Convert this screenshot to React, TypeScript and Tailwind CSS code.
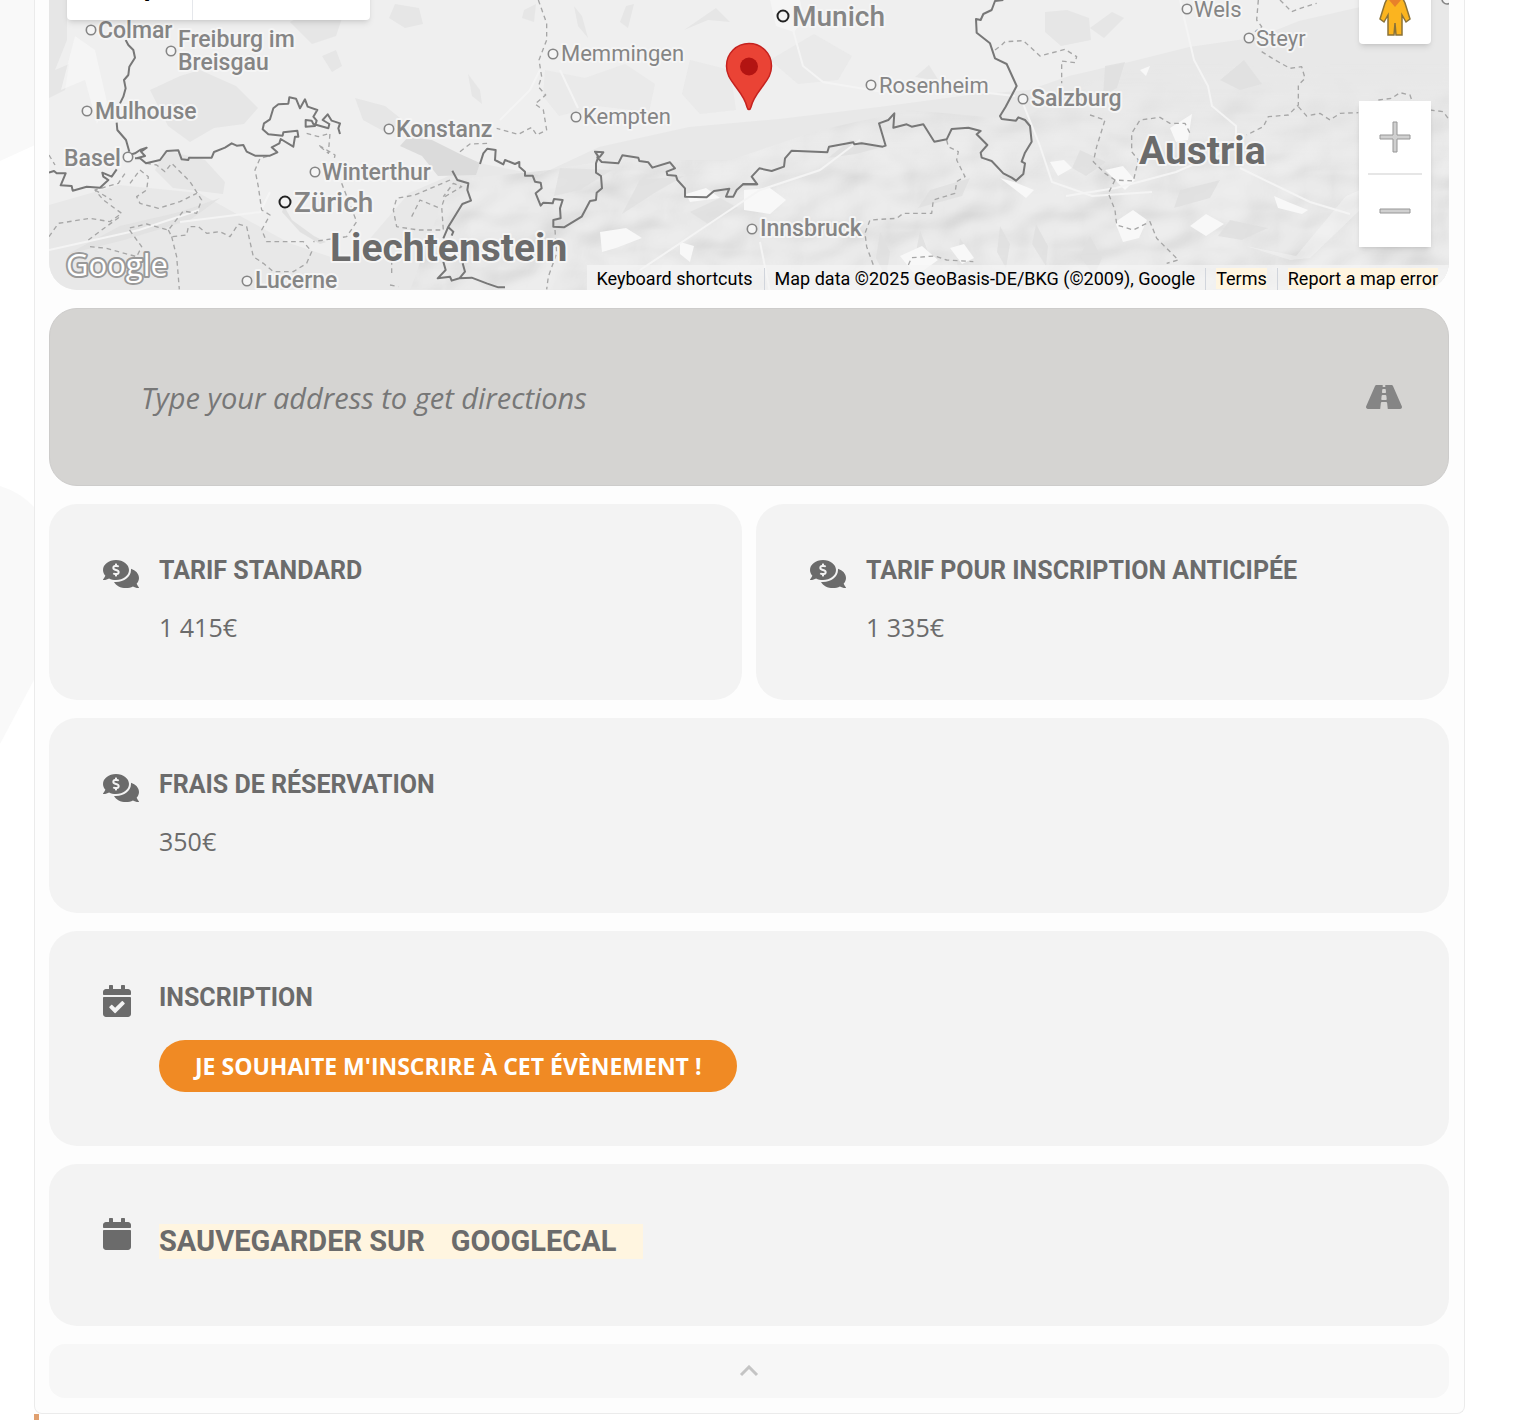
import * as React from 'react'
import { FaCalendar, FaCalendarCheck, FaCommentsDollar, FaRoad } from 'react-icons/fa'

interface City {
  name: string
  x: number
  y: number
  size: number
  weight: number
  dot?: [number, number]
  capital?: boolean
}

const cities: City[] = [
  { name: 'Colmar', x: 98, y: 38, size: 23, weight: 500, dot: [91, 30] },
  { name: 'Freiburg im', x: 178, y: 47, size: 23, weight: 500, dot: [171, 51] },
  { name: 'Breisgau', x: 178, y: 70, size: 23, weight: 500 },
  { name: 'Mulhouse', x: 95, y: 119, size: 23, weight: 500, dot: [87, 111] },
  { name: 'Basel', x: 64, y: 166, size: 23, weight: 500, dot: [128, 157] },
  { name: 'Konstanz', x: 396, y: 137, size: 23, weight: 500, dot: [389, 129] },
  { name: 'Winterthur', x: 322, y: 180, size: 23, weight: 500, dot: [315, 172] },
  { name: 'Zürich', x: 294, y: 212, size: 28, weight: 500, dot: [285, 202], capital: true },
  { name: 'Lucerne', x: 255, y: 288, size: 23, weight: 500, dot: [247, 281] },
  { name: 'Memmingen', x: 561, y: 61, size: 22, weight: 400, dot: [553, 54] },
  { name: 'Kempten', x: 583, y: 124, size: 22, weight: 400, dot: [576, 117] },
  { name: 'Munich', x: 792, y: 26, size: 28, weight: 500, dot: [783, 16], capital: true },
  { name: 'Rosenheim', x: 879, y: 93, size: 22, weight: 400, dot: [871, 85] },
  { name: 'Salzburg', x: 1031, y: 106, size: 23, weight: 500, dot: [1023, 99] },
  { name: 'Innsbruck', x: 760, y: 236, size: 23, weight: 500, dot: [752, 229] },
  { name: 'Wels', x: 1194, y: 17, size: 22, weight: 400, dot: [1187, 9] },
  { name: 'Steyr', x: 1256, y: 46, size: 22, weight: 400, dot: [1249, 38] },
]

const font = 'Roboto, "Liberation Sans", sans-serif'

// each tile is drawn at three times the size of the map
const tiles = [
  {
    x: 40,
    border:
      'M257 120 265 135 280 150 285 173 268 200 265 225 252 240 257 265 250 290 240 310M230 368 232 390 245 405 258 420 268 455M285 475 300 475 318 490 360 480 380 453 415 451 425 478 445 480 447 473 515 473 522 456 555 443 575 430 590 437 610 435 620 455 645 467 690 467 712 457 695 442 718 430 722 417 760 440 765 410 775 410 772 392 730 397 728 407 685 403 668 388 672 370 690 358 700 325 715 313 745 311 748 292 768 296 780 325 795 298 803 320 832 330 820 350 830 362 825 378 797 380 797 360 815 362 820 372 865 385 868 372 848 360 863 343 875 362 900 370 895 385 900 402M268 465 285 460 300 450 320 443 303 455 315 468 290 475M27 518 42 513 50 520 77 520 62 556 95 558 98 572 140 560 180 563 205 540 190 530 187 518 215 530 230 508',
    region:
      'M27 465 45 495M27 710 55 670 150 655 210 665 245 640 190 600 165 570 235 550 255 520M165 570 215 600M145 720 185 690 240 650M150 740 200 745 290 770 305 740 265 685 320 672 385 690 430 633 470 640 485 600 450 545 440 535 395 490 375 515 350 495 320 490M270 550 300 510 325 530 320 570 290 590 300 610 355 625 420 605 470 580M385 690 395 710 440 705 445 680 475 680 500 700 540 695 570 710 595 672 620 680 640 770 670 790 700 815 760 815 800 790 815 755 790 725 680 725 665 690 690 645 665 630 655 560 645 510 660 475 690 467M395 710 410 770 418 868M905 550 950 665 920 710 820 725M800 400 835 410 870 400 865 460 835 435 885 465 880 490',
  },
  {
    x: 390,
    border:
      'M270 492 280 460 292 446 317 450 315 480 340 493 345 480 375 492 388 486 388 500 405 515 405 527 428 527 435 545 452 548 455 565 437 580 452 617 460 608 488 610 492 597 518 600 510 625 512 655 490 660 490 680 522 682 575 650 600 603 618 600 620 578 636 565 633 528 618 518 618 490 625 470 615 455 640 457 630 470 622 472 635 486 685 490 697 466 745 473 748 483 775 487 787 503 840 487 855 505 830 515 832 525 858 527 862 540 885 565 885 590 950 592 972 573 1018 566 1008 590 1030 590 1040 570 1060 552 1102 553M187 512 202 540 235 550 232 570 243 602 217 612 175 680 160 715M175 682 190 695 185 707M160 785 167 810 143 835 180 830 185 842 208 835 225 815 218 790M208 835 245 833 290 850 325 862 345 862',
    region:
      'M445 0 470 70 470 120 447 180 455 230 445 260 467 285 435 312 460 330 470 390 440 405 425 382 385 403 320 385M210 455 240 432 295 430M495 690 500 760 475 830 470 868M180 540 75 585 20 595 10 630 20 680 85 690 160 690 155 620 165 590 215 560 190 550 160 590M65 650 90 600 150 625M5 780 5 830M0 855 25 860',
  },
  {
    x: 740,
    border:
      'M8 553 52 553 35 530 58 505 95 513 132 500 135 475 155 452 262 457 267 440 340 427 343 433 365 430 428 440 437 437 417 370 445 360 463 340 460 383 500 373 515 380 550 373 583 425 620 418 635 387 685 383 722 393 710 403 742 435 722 458 725 473 755 483 790 520 815 533 828 542 850 522 855 490 845 485 855 458 875 425 870 378 855 360 835 352 828 362 785 357 780 348 797 320 830 258 800 192 765 175 750 130 710 98 708 57 722 60 730 42 755 30 765 3 790 0',
    region:
      'M765 150 785 135 795 125 850 122 900 168 975 148 1010 170 1005 188 965 183 965 250M620 420 625 440 655 455 650 480 675 530 650 545 645 580 580 600 575 640 490 640 470 655 390 660 375 700 380 740 400 795M505 795 515 773 585 768 620 780 700 785',
  },
  {
    x: 1090,
    border: '',
    region:
      'M0 345 45 360 20 440 10 485 45 520 75 540 130 543 145 480 125 455 125 400 150 360 210 352 240 370 285 370 300 400M75 540 55 580 75 630 80 675 130 690 180 665 200 715 265 780 230 790M505 0 500 60 515 80 495 95M515 155 555 180 600 205 635 200 645 235 625 255 625 315 595 345 535 350 520 380 470 405M625 320 650 348 690 340 720 360 750 340 805 338M1020 330 1060 335 1078 360M865 300 905 295 930 278 960 285 965 300M570 0 605 35 640 22 680 10',
  },
]

function Terrain() {
  return (
    <g>
      <rect x="49" y="0" width="1400" height="290" fill="#efefef" />
      <g fill="#e6e6e6">
        <path d="M49 0h18v40l-12 30 14-6-4 26-16 8z" />
        <path d="M150 90l30-14 20-6 36 16 22 22-14 16-30 4-24 14-22-16z" />
        <path d="M290 22l20-10 32 6-6 18-24 8zM322 56l14-6 6 16-10 6zM355 98l30 8 20 16-20 10-22-12z" />
        <path d="M165 150l40 10 20 22-2 12-50-6-18-18z" />
        <path d="M395 4l24 4 4 16-18 4-16-10zM524 10l12-6-2 18-12-4zM574 6l8 10 6 22-10-12zM626 6l8-2-6 24-8-6zM684 30l32-22 14 14-22-2z" />
        <path d="M468 74l12 16 2 14-10-8z" />
        <path d="M545 70l40 8 40-14 30 20-6 28-52-6-38 10-16-20z" opacity="0.6" />
        <path d="M690 60l40 10 6 40-36 4-18-20zM770 60l44-26 38 22-14 24-40 4z" opacity="0.6" />
        <path d="M915 77l14-12 10 16zM1045 12l22-2 22 8 2 22-30 6-16-14z" />
        <path d="M1090 28l22-16 12 6-20 20z" />
      </g>
      <path d="M49 205l70-20 80 8 90 50 60 20 60-70 70-30 60 12 60-28 90-20 90-8 100-12 90-12 60-5 40-14 60-14 60-15 70-10 40-16 70-16 80-8V290H49z" fill="#e8e8e8" />
      <path d="M410 290l40-110 100-10 60-10 120 0 90-30 90-20 110 10 70-40 80-20 130 10 149-30V290z" fill="#fff" filter="url(#relief)" mask="url(#alps)" opacity="0.4" />
      <g fill="#dbdbdb">
        <path d="M408 137l24 3 28 14 20 9-4 12-38 1-16-20-22-10z" />
        <path d="M284 206l8 14 22 16 12 6-6 2-20-12-18-20z" opacity="0.7" />
      </g>
      <g fill="#e0e0e0" opacity="0.8">
        <path d="M120 226l60-14 40-14-30 22-66 20-56 14z" />
        <path d="M560 168l52 2-32 20-26 6zM640 180l44-4-28 16-34 22zM690 212l30-14 18 10-30 16zM850 140l36 6-30 8-28 4zM930 190l40-12-8 18-44 12zM1080 150l26 12-20 14-14-8zM1180 190l40-10-10 18-36 10zM1230 220l38 8-26 12-24-4zM1105 66l20-4-8 26-14 8zM1220 80l24-20 18 24-22 6z" />
        <path d="M880 232l10 20-4 26-10-20zM920 230l8 22-4 26-9-20zM960 238l10 16-4 26-9-16zM1000 226l10 18-4 24-9-16zM1036 224l12 22-2 20-14-22zM1090 236l12 22-8 18-14-20z" />
      </g>
      <g fill="#f8f8f8">
        <path d="M75 36l20 14 12 52-10 22-12-44-24 10zM770 0h30l4 20-10 12-18-6z" opacity="0.6" />
        <path d="M686 194l20-6 14 10-30 4zM744 190l26-2 16 12-16 14-26-4zM600 232l26-4 16 10-26 10-14 4zM680 242l14 4-4 16-10-8z" />
        <path d="M900 256l22-10 16 14-22 16zM950 248l14-4 10 14-12 6zM1000 178l14 4 20 8-8 8zM1050 162l14-2 8 8-14 8zM1105 170l18-4 12 14-10 10zM1170 128l22-14-4 26-12 2zM1274 196l14 6 20 8-6 4-24-6zM1140 70l10-4-4 10z" />
        <path d="M1115 222l18-12 14 10-8 18-16 4zM1190 226l16-12 18 10-18 12z" />
        <path d="M1246 246l50 10 50-60 14-6v20l-50 48-20 2z" opacity="0.4" />
      </g>
      <g fill="none" stroke="#f4f4f4" strokeWidth="2">
        <path d="M793 30l10 36 20 16 60 10 60-4 72 8M640 270l60-40 60-40 60-20 40-30" />
        <path d="M1180 0l14 60 14 26 4 20 24 20v20l-60 26-60 16-50 8M1240 168l70 34 40 12" />
        <path d="M500 120l30-30 10-20M560 70l18 38M1020 96l20 50 12 36 40 14 60-4M770 292l-10-50" />
        <path d="M49 250l90-20 60-20M180 222l80-10 10-20" />
      </g>
    </g>
  )
}

function Borders() {
  return (
    <g fill="none" strokeLinejoin="round">
      {tiles.map((t) => (
        <g key={t.x} transform={`translate(${t.x} 0) scale(0.33333)`}>
          <path d={t.region} stroke="#a6a6a6" strokeWidth="4" strokeDasharray="14 11" />
          <path d={t.border} stroke="#777" strokeWidth="6" />
        </g>
      ))}
    </g>
  )
}

function MapCanvas() {
  return (
    <svg viewBox="49 0 1400 290" preserveAspectRatio="xMidYMax slice" className="block h-[290px] w-full" role="img" aria-label="Map">
      <defs>
        <filter id="relief" x="0" y="0" width="100%" height="100%">
          <feTurbulence type="fractalNoise" baseFrequency="0.018 0.026" numOctaves="2" seed="8" result="noise" />
          <feDiffuseLighting in="noise" surfaceScale="9" diffuseConstant="1.05" lightingColor="#f2f2f2" result="light">
            <feDistantLight azimuth="225" elevation="62" />
          </feDiffuseLighting>
          <feComposite in="light" in2="SourceAlpha" operator="in" />
        </filter>
        <linearGradient id="fade" x1="0" y1="0" x2="0" y2="1">
          <stop offset="0" stopColor="#000" />
          <stop offset="0.5" stopColor="#fff" />
        </linearGradient>
        <mask id="alps" maskUnits="userSpaceOnUse" x="400" y="60" width="1060" height="230">
          <rect x="400" y="60" width="1060" height="230" fill="url(#fade)" />
        </mask>
      </defs>
      <Terrain />
      <Borders />
      <g fontFamily={font} fill="#858585" stroke="#f5f5f5" strokeWidth="4" strokeLinejoin="round" paintOrder="stroke">
        {cities.map((c) => (
          <text key={c.name} x={c.x} y={c.y} fontSize={c.size} fontWeight={c.weight}>
            {c.name}
          </text>
        ))}
        <g fill="#6b6b6b" fontSize="39" fontWeight="700">
          <text x="330" y="261">Liechtenstein</text>
          <text x="1139" y="164">Austria</text>
        </g>
      </g>
      {cities.map((c) =>
        c.dot ? (
          <circle
            key={c.name}
            cx={c.dot[0]}
            cy={c.dot[1]}
            r={c.capital ? 5.5 : 4.7}
            fill="#f5f5f5"
            stroke={c.capital ? '#222' : '#858585'}
            strokeWidth={c.capital ? 2 : 1.6}
          />
        ) : null
      )}
      <circle cx="1447" cy="-1" r="5" fill="#f5f5f5" stroke="#858585" strokeWidth="1.6" />
      {/* marker */}
      <path d="M749 43.500c-12.500 0-22.500 10-22.500 22.500 0 8 3.500 13 8 19 6 8 11 14 12.500 22 .5 2 1 2.500 2 2.500s1.500-.5 2-2.500c1.500-8 6.500-14 12.500-22 4.500-6 8-11 8-19 0-12.500-10-22.500-22.500-22.500z" fill="#ea4335" stroke="#c5221f" strokeWidth="1.500" />
      <circle cx="749" cy="66.500" r="9" fill="#b31412" />
      <text x="66" y="276" fontFamily={'"Open Sans", sans-serif'} fontSize="31" fontWeight="500" fill="#fff" stroke="#999" strokeWidth="4" strokeLinejoin="round" paintOrder="stroke">
        Google
      </text>
    </svg>
  )
}

function EventMap() {
  return (
    <div className="relative overflow-hidden rounded-b-[28px] font-[Roboto,'Liberation_Sans',sans-serif]">
      <MapCanvas />
      <div className="absolute -top-[52px] left-[18px] flex h-[72px] overflow-hidden rounded-sm bg-white text-[32px] shadow-md">
        <button type="button" className="w-[126px] border-r border-gray-200 font-medium text-black">Map</button>
        <button type="button" className="w-[177px] text-gray-600">Satellite</button>
      </div>
      <button type="button" aria-label="Street View" className="absolute -top-7 right-[18px] flex h-[72px] w-[72px] justify-center overflow-hidden rounded-sm bg-white shadow-md">
        <svg viewBox="0 0 32 64" className="h-16 w-8">
          <circle cx="16" cy="16" r="8" fill="#fbb41f" />
          <path d="M9 25h14l3 6 5 16-4 3-4-7v20h-6l-1-12-1 12H9V43l-4 7-4-3 5-16z" fill="#fbb41f" stroke="#8a7238" strokeWidth="1.500" />
          <path d="M10 28h12l-6 7z" fill="#e8802a" />
        </svg>
      </button>
      <div className="absolute top-[101px] right-[18px] flex w-[72px] flex-col items-center bg-white shadow-md">
        <button type="button" aria-label="Zoom in" className="flex h-[72px] w-full items-center justify-center">
          <svg viewBox="0 0 32 32" className="h-8 w-8">
            <path d="M14 1h4v13h13v4H18v13h-4V18H1v-4h13z" fill="#d0d0d0" stroke="#969696" />
          </svg>
        </button>
        <div className="h-[2px] w-[54px] bg-[#e6e6e6]" />
        <button type="button" aria-label="Zoom out" className="flex h-[72px] w-full items-center justify-center">
          <svg viewBox="0 0 32 32" className="h-8 w-8">
            <path d="M1 14h30v4H1z" fill="#d0d0d0" stroke="#969696" />
          </svg>
        </button>
      </div>
      <div className="absolute right-0 bottom-0 flex h-[25px] items-end bg-[#f5f5f5]/70 pr-[11px] pl-[9px] text-[18px] leading-[22px] whitespace-nowrap text-black">
        <button type="button" className="pr-[11px]">Keyboard shortcuts</button>
        <span className="border-l border-gray-300 px-[10px]">Map data ©2025 GeoBasis-DE/BKG (©2009), Google</span>
        <span className="border-l border-gray-300 px-[10px]">
          <a href="#terms" className="bg-[#fff5e0]">Terms</a>
        </span>
        <span className="border-l border-gray-300 pl-[10px]">
          <a href="#report" className="bg-[#fff5e0]">Report a map error</a>
        </span>
      </div>
    </div>
  )
}

interface CardProps {
  icon: React.ReactNode
  title?: string
  className?: string
  children: React.ReactNode
}

function Card({ icon, title, className = 'pb-[52px]', children }: CardProps) {
  return (
    <section className={`flex flex-1 rounded-[28px] bg-[#f3f3f3] px-[54px] text-[#6b6b6b] ${className}`}>
      <div className="w-14 shrink-0 pt-[54px]">{icon}</div>
      <div className="min-w-0 flex-1 pt-[51px]">
        {title && (
          <h3 className="font-[Roboto,'Liberation_Sans',sans-serif] text-[25px] leading-8 font-bold uppercase">{title}</h3>
        )}
        {children}
      </div>
    </section>
  )
}

function Price({ children }: { children: React.ReactNode }) {
  return <p className="mt-5 text-[25px] leading-10">{children}</p>
}

export default function App() {
  return (
    <div className="relative overflow-hidden bg-white font-['Open_Sans','Liberation_Sans',sans-serif]">
      <svg viewBox="0 0 35 760" className="absolute top-0 left-0 h-[760px] w-[35px]" aria-hidden="true">
        <path d="M0 0h35v145L0 161z" fill="#f9f9f9" />
        <path d="M0 486q20 6 35 22v170L0 744z" fill="#f9f9f9" />
      </svg>
      <main className="relative mr-[59px] ml-[34px] flex flex-col gap-[18px] rounded-b-lg border-x border-b border-[#ebebeb] bg-[#fdfdfd] pr-[15px] pb-[15px] pl-[14px]">
        <EventMap />

        <form
          onSubmit={(e) => e.preventDefault()}
          className="flex h-[178px] items-center rounded-[28px] border border-[#cdcccb] bg-[#d5d4d2] pr-[46px] pl-[91px]"
        >
          <input
            type="text"
            aria-label="Type your address to get directions"
            placeholder="Type your address to get directions"
            className="h-full min-w-0 flex-1 bg-transparent text-[29px] text-[#666] italic outline-none placeholder:text-[#777]"
          />
          <button type="submit" aria-label="Get directions" className="text-[#858585]">
            <FaRoad className="h-8 w-9" />
          </button>
        </form>

        <div className="flex gap-[14px]">
          <Card icon={<FaCommentsDollar className="h-8 w-9" />} title="Tarif standard" className="pb-[53px]">
            <Price>1 415€</Price>
          </Card>
          <Card icon={<FaCommentsDollar className="h-8 w-9" />} title="Tarif pour inscription anticipée" className="pb-[53px]">
            <Price>1 335€</Price>
          </Card>
        </div>

        <Card icon={<FaCommentsDollar className="h-8 w-9" />} title="Frais de réservation">
          <Price>350€</Price>
        </Card>

        <Card icon={<FaCalendarCheck className="h-8 w-7" />} title="Inscription" className="pb-[54px]">
          <a href="#inscription" className="mt-[26px] inline-block rounded-full bg-[#f08a24] px-9 align-top text-[23px] leading-[52px] font-bold text-white uppercase">
            Je souhaite m'inscrire à cet évènement !
          </a>
        </Card>

        <Card icon={<FaCalendar className="h-8 w-7" />} className="pb-[67px]">
          <div className="mt-[9px] flex font-[Roboto,'Liberation_Sans',sans-serif] text-[29px] leading-[35px] font-bold uppercase">
            <a href="#ics" className="bg-[#fff5e0] pr-[26px]">Sauvegarder sur</a>
            <a href="#googlecal" className="bg-[#fff5e0] pr-[26px]">GoogleCal</a>
          </div>
        </Card>

        <button type="button" aria-label="Close" className="flex h-[54px] items-center justify-center rounded-2xl bg-[#f7f7f7]">
          <svg viewBox="0 0 20 12" className="h-3 w-5" fill="none" stroke="#c4c4c4" strokeWidth="3">
            <path d="M2 10l8-8 8 8" />
          </svg>
        </button>
      </main>
      <div className="ml-[34px] h-[6px] w-[5px] bg-[#e0a070]" />
    </div>
  )
}
